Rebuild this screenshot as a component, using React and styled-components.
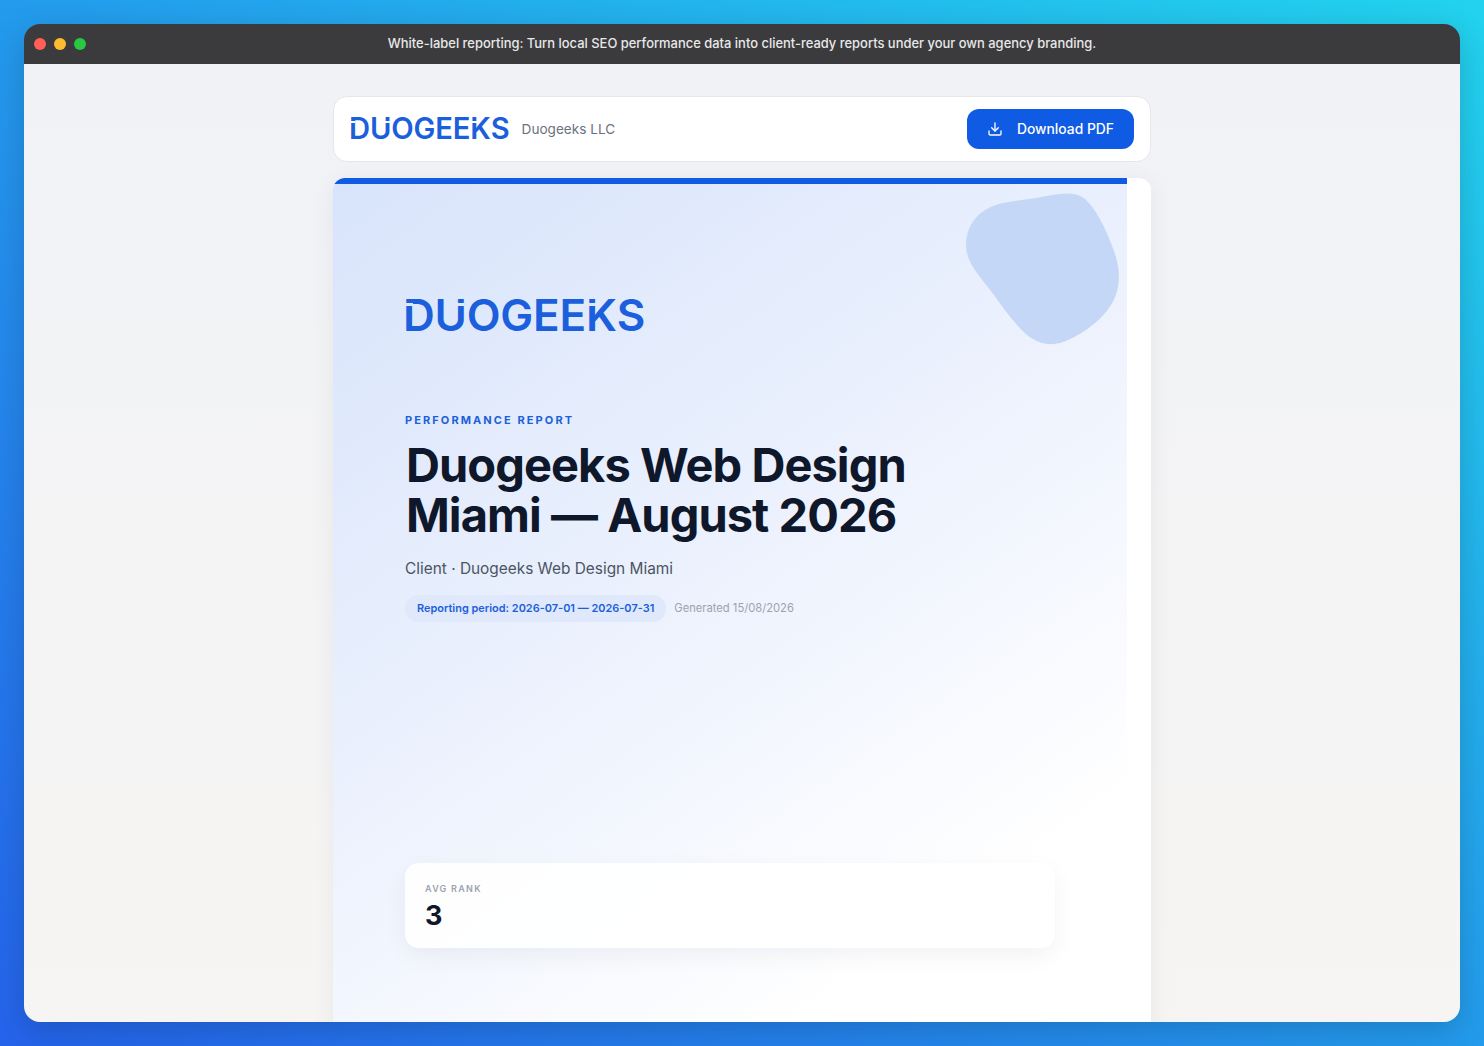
import { Download } from "lucide-react"
import { createGlobalStyle, styled } from "styled-components"

const GlobalStyle = createGlobalStyle`
  * {
    box-sizing: border-box;
  }

  html,
  body {
    margin: 0;
    height: 100%;
  }

  body {
    font-family: Inter, "Liberation Sans", sans-serif;
    overflow: hidden;
  }
`

const Backdrop = styled.div`
  height: 1046px;
  padding: 24px;
  background: linear-gradient(to top right, #2563eb, #22d3ee);
`

const Window = styled.div`
  display: flex;
  flex-direction: column;
  height: 998px;
  border-radius: 16px;
  overflow: hidden;
  box-shadow: 0 8px 32px rgba(0, 0, 0, 0.18);
`

const TitleBar = styled.div`
  position: relative;
  display: flex;
  align-items: center;
  justify-content: center;
  flex: none;
  height: 40px;
  background: #3b3b3d;
`

const Lights = styled.div`
  position: absolute;
  left: 10px;
  display: flex;
  gap: 8px;
`

const Light = styled.span`
  width: 12px;
  height: 12px;
  border-radius: 50%;
  background: ${({ $color }) => $color};
`

const Caption = styled.p`
  margin: 0 0 2px;
  color: #e8e8e8;
  font-size: 12.94px;
  font-weight: 500;
`

const Content = styled.div`
  flex: 1;
  display: flex;
  flex-direction: column;
  align-items: center;
  gap: 16px;
  min-height: 0;
  padding-top: 32px;
  overflow: hidden;
  background: linear-gradient(180deg, #f0f2f6, #f7f5f3);
`

const Toolbar = styled.div`
  display: flex;
  align-items: center;
  justify-content: space-between;
  flex: none;
  width: 818px;
  height: 66px;
  padding: 0 16px 0 15px;
  border: 1px solid #e4e6ea;
  border-radius: 14px;
  background: #fff;
`

const Brand = styled.div`
  display: flex;
  align-items: center;
  gap: 12px;
`

const Logo = styled.span`
  color: #1c5fdc;
  font-size: ${({ $size }) => $size}px;
  font-weight: 600;
  line-height: 1;
  letter-spacing: -0.005em;
`

// the wordmark's cut stems: a thin slice of the background across the letter
const LogoLetter = styled.span`
  position: relative;

  &::after {
    content: "";
    position: absolute;
    top: 0.345em;
    left: ${({ $left }) => $left}em;
    width: 0.16em;
    height: 0.055em;
    background: ${({ $bg }) => $bg};
  }
`

const Company = styled.span`
  color: #6b7280;
  font-size: 13.6px;
`

const DownloadButton = styled.button`
  display: flex;
  align-items: center;
  gap: 14px;
  height: 40px;
  padding: 0 20px;
  border: 0;
  border-radius: 12px;
  background: #0f5be4;
  color: #fff;
  font-family: inherit;
  font-size: 13.85px;
  font-weight: 500;
`

const ButtonLabel = styled.span`
  margin-bottom: 1px;
`

const Sheet = styled.div`
  flex: none;
  width: 818px;
  border-radius: 12px 12px 0 0;
  background: #fff;
  overflow: hidden;
  box-shadow: 0 4px 24px rgba(15, 23, 42, 0.06);
`

const Cover = styled.div`
  position: relative;
  width: 794px;
  height: 1123px;
  padding: 113px 72px 0;
  border-top: 6px solid #0f5be4;
  background: linear-gradient(145deg, #d8e4fb 0%, #eaf0fd 35%, #ffffff 70%);
`

const Blob = styled.svg`
  position: absolute;
  top: 9px;
  right: 7px;
  width: 155px;
  height: 152px;
`

const CoverLogo = styled.div`
  display: flex;
  align-items: center;
  height: 36px;
  margin-bottom: 80px;
  margin-left: -2px;
`

const Eyebrow = styled.p`
  margin: 0 0 13px;
  color: #1c5fdc;
  font-size: 11px;
  font-weight: 700;
  line-height: 14px;
  letter-spacing: 0.19em;
`

const Heading = styled.h1`
  margin: 0 0 17px 1px;
  max-width: 560px;
  color: #0f172a;
  font-size: 47px;
  font-weight: 700;
  line-height: 50px;
  letter-spacing: -0.02em;
`

const ClientName = styled.p`
  margin: 0 0 14px;
  color: #4b5563;
  font-size: 15.4px;
  line-height: 24px;
`

const Meta = styled.div`
  display: flex;
  align-items: center;
  gap: 8px;
`

const Period = styled.span`
  padding: 6px 12px;
  border-radius: 14px;
  background: #dfe9fb;
  color: #1c5fdc;
  font-size: 10.95px;
  font-weight: 600;
  line-height: 15px;
`

const Generated = styled.span`
  margin-bottom: 2px;
  color: #9ca3af;
  font-size: 11.2px;
`

const StatCard = styled.div`
  width: 650px;
  height: 85px;
  margin-top: 241px;
  padding: 20px;
  border-radius: 14px;
  background: rgba(255, 255, 255, 0.9);
  box-shadow: 0 8px 24px rgba(15, 23, 42, 0.05);
`

const StatLabel = styled.div`
  color: #9ca3af;
  font-size: 9px;
  font-weight: 600;
  line-height: 12px;
  letter-spacing: 0.14em;
`

const StatValue = styled.div`
  margin-top: 5px;
  color: #0f172a;
  font-size: 27px;
  font-weight: 700;
  line-height: 32px;
`

const Wordmark = ({ size, bg }) => (
  <Logo $size={size}>
    <LogoLetter $left={0.06} $bg={bg}>
      D
    </LogoLetter>
    <LogoLetter $left={0.52} $bg={bg}>
      U
    </LogoLetter>
    OGEE
    <LogoLetter $left={0.06} $bg={bg}>
      K
    </LogoLetter>
    S
  </Logo>
)

const App = () => {
  return (
    <Backdrop>
      <GlobalStyle />
      <Window>
        <TitleBar>
          <Lights>
            <Light $color="#ff5f57" />
            <Light $color="#febc2e" />
            <Light $color="#28c840" />
          </Lights>
          <Caption>
            White-label reporting: Turn local SEO performance data into
            client-ready reports under your own agency branding.
          </Caption>
        </TitleBar>
        <Content>
          <Toolbar>
            <Brand>
              <Wordmark size={29.2} bg="#fff" />
              <Company>Duogeeks LLC</Company>
            </Brand>
            <DownloadButton>
              <Download size={16} />
              <ButtonLabel>Download PDF</ButtonLabel>
            </DownloadButton>
          </Toolbar>
          <Sheet>
            <Cover>
              <Blob viewBox="46 36 463 456">
                <path
                  d="M48 190C50 130 85 85 150 68C190 58 240 56 290 45C340 35 375 34 400 50C440 78 480 170 497 225C512 275 510 320 490 360C465 410 410 450 360 475C320 495 280 495 245 472C205 445 170 395 130 340C95 290 48 250 48 190Z"
                  fill="#c5d7f6"
                />
              </Blob>
              <CoverLogo>
                <Wordmark size={44} bg="#dfe8fb" />
              </CoverLogo>
              <Eyebrow>PERFORMANCE REPORT</Eyebrow>
              <Heading>Duogeeks Web Design Miami — August 2026</Heading>
              <ClientName>Client · Duogeeks Web Design Miami</ClientName>
              <Meta>
                <Period>Reporting period: 2026-07-01 — 2026-07-31</Period>
                <Generated>Generated 15/08/2026</Generated>
              </Meta>
              <StatCard>
                <StatLabel>AVG RANK</StatLabel>
                <StatValue>3</StatValue>
              </StatCard>
            </Cover>
          </Sheet>
        </Content>
      </Window>
    </Backdrop>
  )
}

export default App
